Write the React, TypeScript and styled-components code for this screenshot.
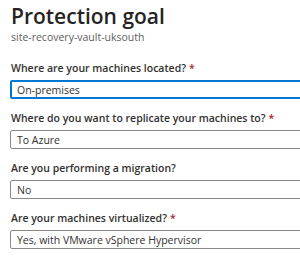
import React from "react";
import styled, { createGlobalStyle } from "styled-components";

const Global = createGlobalStyle`
  html, body { margin: 0; padding: 0; background: #ffffff; overflow: hidden; }
  body { font-family: "Open Sans", "Noto Sans", sans-serif; color: #323130; }
`;

const Page = styled.div`
  padding: 3px 0 0 11px;
  width: 300px;
  height: 270px;
  box-sizing: border-box;
  overflow: hidden;
`;

const Title = styled.h1`
  margin: 0;
  font-size: 21px;
  line-height: 27px;
  font-weight: 600;
  color: #252423;
`;

const Subtitle = styled.div`
  font-size: 10.5px;
  line-height: 14px;
  color: #605e5c;
`;

const Form = styled.div`
  margin-top: 17px;
  display: flex;
  flex-direction: column;
  gap: 12px;
`;

const Field = styled.div`
  display: flex;
  flex-direction: column;
  gap: 4px;
`;

const Label = styled.label`
  font-size: 10.5px;
  line-height: 15px;
  font-weight: 600;
  color: #323130;
`;

const Required = styled.span`
  color: #a4262c;
  margin-left: 3px;
`;

const Select = styled.div<{ $focused?: boolean }>`
  box-sizing: border-box;
  margin-left: -1px;
  width: 300px;
  height: 19px;
  display: flex;
  align-items: center;
  border-radius: 2px;
  border: ${(p) => (p.$focused ? "2px solid #0078d4" : "1px solid #8a8886")};
  padding-left: ${(p) => (p.$focused ? "5px" : "6px")};
  font-size: 10.5px;
  color: #323130;
  white-space: nowrap;
`;

const fields = [
  { label: "Where are your machines located?", required: true, value: "On-premises", focused: true },
  { label: "Where do you want to replicate your machines to?", required: true, value: "To Azure" },
  { label: "Are you performing a migration?", required: false, value: "No" },
  { label: "Are your machines virtualized?", required: true, value: "Yes, with VMware vSphere Hypervisor" },
];

export default function App() {
  return (
    <>
      <Global />
      <Page>
        <Title>Protection goal</Title>
        <Subtitle>site-recovery-vault-uksouth</Subtitle>
        <Form>
          {fields.map((f) => (
            <Field key={f.label}>
              <Label>
                {f.label}
                {f.required && <Required>*</Required>}
              </Label>
              <Select $focused={f.focused}>{f.value}</Select>
            </Field>
          ))}
        </Form>
      </Page>
    </>
  );
}
